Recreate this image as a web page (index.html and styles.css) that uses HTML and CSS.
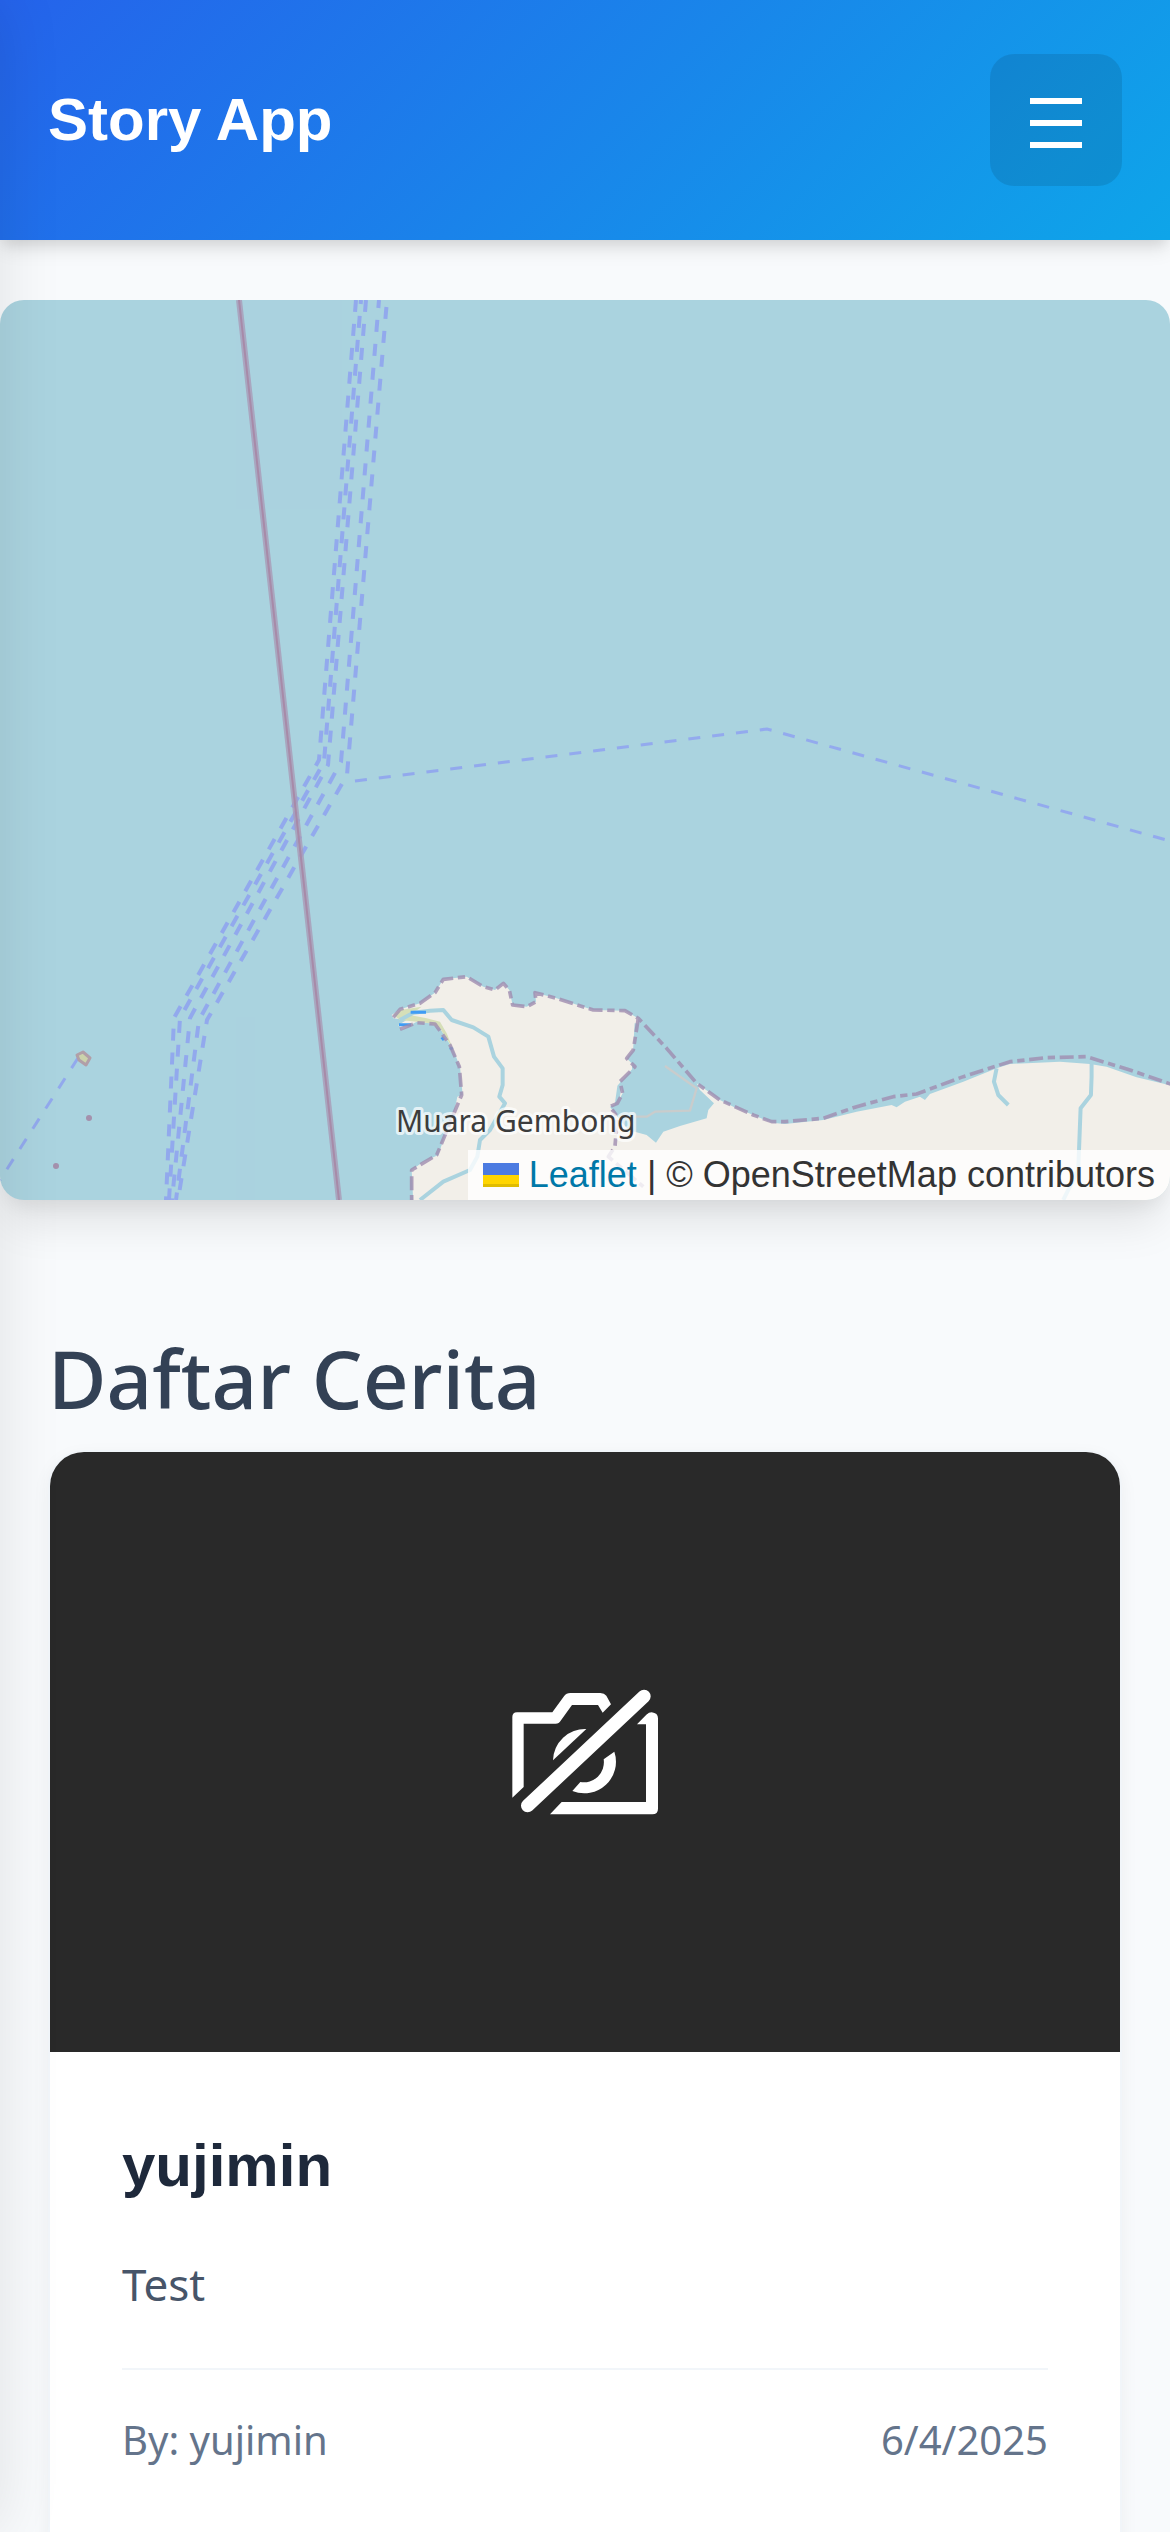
FILE: index.html
```html
<!DOCTYPE html>
<html lang="id">
<head>
  <meta charset="utf-8">
  <meta name="viewport" content="width=device-width, initial-scale=1">
  <title>Story App</title>
  <link rel="stylesheet" href="styles.css">
</head>
<body>
  <header class="site-header">
    <h1 class="brand">Story App</h1>
    <button class="menu-button" type="button" aria-label="Menu">
      <svg class="menu-icon" viewBox="0 0 52 60" aria-hidden="true">
        <path d="M0 11h52M0 33h52M0 55h52" stroke="currentColor" stroke-width="6"/>
      </svg>
    </button>
  </header>

  <main>
    <section class="map" aria-label="Peta">
      <svg class="map-tiles" viewBox="0 0 1170 900" preserveAspectRatio="xMidYMid slice" aria-hidden="true">
        <!-- ferry routes -->
        <g fill="none" stroke="#90a5ef" stroke-width="4" stroke-dasharray="12 12" opacity=".9">
          <path d="M356 0L319 460L174 718L166 900"/>
          <path d="M361 0L324 462L180 718L169 900" stroke-dashoffset="8"/>
          <path d="M366 0L328 465L190 718L172 900"/>
          <path d="M379 0L341 462L199 720L176 900" stroke-dashoffset="4"/>
          <path d="M387 0L347 475L207 720L178 900" stroke-dashoffset="17"/>
          <path d="M355 481L767 429L1170 541" stroke-width="3"/>
          <path d="M78 758L0 880" stroke-width="3"/>
        </g>
        <!-- marine boundary -->
        <path d="M239 0L339 900" stroke="#a99cb8" stroke-width="6" opacity=".8"/>
        <path d="M239 0L339 900" stroke="#a78aa8" stroke-width="2"/>
        <!-- small islands -->
        <path d="M77 755L83 752L90 758L86 765L79 760Z" fill="#cbd3ac" stroke="#b19fa8" stroke-width="3" stroke-linejoin="round"/>
        <circle cx="89" cy="818" r="3" fill="#a491ad"/>
        <circle cx="56" cy="866" r="3" fill="#a491ad"/>
        <!-- coast -->
        <g transform="translate(380 640) scale(.3333)" fill="none" stroke-linejoin="round">
          <path fill="#f2efe9" d="M35 225L60 208L120 190L165 158L190 118L260 110L310 140L345 150L370 130L388 150L398 195L440 200L468 185L465 158L530 175L640 210L735 212L775 235L768 290L760 330L740 355L765 380L750 405L720 425L728 460L712 490L690 500L712 530L745 570L800 585L828 608L850 575L900 558L980 535L985 510L1002 490L960 450L950 430L1020 480L1060 500L1120 525L1175 548L1215 552L1330 540L1430 515L1535 495L1550 502L1575 485L1620 470L1635 480L1650 462L1750 425L1850 385L1890 372L2040 365L2130 372L2180 380L2270 412L2380 438V790H100L95 690L130 665L175 645L190 600L222 520L232 470L248 465L240 380L220 330L180 265L150 250L110 245L65 270L55 255L80 240L40 235Z"/>
          <path fill="#d6dfb8" d="M40 225L60 210L125 200L90 225L140 235L180 245L200 280L218 325L180 265L150 250L110 245L60 240Z"/>
          <g stroke="#aad3df" stroke-width="12">
            <path d="M60 240L100 218L150 212L190 210L215 240L280 262L325 290L342 350L368 385L368 435L358 470L375 490L330 570L300 600L292 650L270 690L190 725L120 780"/>
            <path d="M1850 385L1842 425L1855 465L1885 495"/>
            <path d="M2135 370V410L2133 465L2102 505L2095 690L2050 780"/>
            <path d="M770 250L762 390L718 440L708 510"/>
          </g>
          <path d="M92 217H138M57 254H93M185 292L192 300M210 323L218 328" stroke="#3f9cf5" stroke-width="9"/>
          <path d="M855 378L950 445L930 512L825 515L800 530H765" stroke="#c9cccc" stroke-width="7"/>
          <g stroke="#a08db0" stroke-width="11" stroke-dasharray="42 14 22 14" opacity=".8">
            <path d="M40 232L60 208L120 190L165 158L190 118L260 110L310 140L345 150L370 130L388 150L398 195L440 200L468 185L465 158L530 175L640 210L735 212L775 235L860 325L950 430L1020 480L1120 525L1175 545H1215L1330 535L1430 500L1540 470L1610 462L1750 410L1890 365L2000 353L2120 350L2250 390L2380 435"/>
            <path d="M775 235L760 330L740 355L765 380L720 425L728 460L712 490L690 500L712 530L705 620L685 650L790 740"/>
            <path d="M60 268L110 248L165 252L210 315L238 380L245 465L222 520L185 610L170 645L95 690V780"/>
          </g>
        </g>
        <text class="place" x="396" y="832">Muara Gembong</text>
      </svg>
      <p class="attribution">
        <a href="#leaflet"><svg class="flag" viewBox="0 0 12 8" aria-hidden="true"><path fill="#4C7BE1" d="M0 0h12v4H0z"/><path fill="#FFD500" d="M0 4h12v3H0z"/><path fill="#E0BC00" d="M0 7h12v1H0z"/></svg> Leaflet</a> | © OpenStreetMap contributors
      </p>
    </section>

    <section class="stories">
      <h2 class="section-title">Daftar Cerita</h2>
      <article class="card">
        <div class="card-image">
          <svg class="no-photo" viewBox="1 5 630 540" fill="#fff" role="img" aria-label="Foto tidak tersedia">
            <path d="M98 412V170Q98 156 112 156H218L253 108Q260 98 272 98H362Q374 98 380 106L394 132L369 157L355 134H277L243 181Q238 190 228 190H132V380Z"/>
            <path d="M472 192L500 163Q508 156 516 156Q535 158 535 174V445Q535 462 518 462H211L246 425H499V192Z"/>
            <path d="M320 206L220 300A96 96 0 0 1 320 206Z"/>
            <path d="M404 274A95 95 0 0 1 278 392L302 365A60 60 0 0 0 372 297Z"/>
            <path d="M144 436L493 108" stroke="#fff" stroke-width="40" stroke-linecap="round"/>
          </svg>
        </div>
        <div class="card-body">
          <h3 class="card-title">yujimin</h3>
          <p class="card-text">Test</p>
          <footer class="card-meta">
            <span>By: yujimin</span>
            <time datetime="2025-06-04">6/4/2025</time>
          </footer>
        </div>
      </article>
    </section>
  </main>
</body>
</html>
```
FILE: styles.css
```css
* {
  box-sizing: border-box;
  margin: 0;
}

body {
  background: #f8fafc;
  color: #1e293b;
  font-family: "Noto Sans", "Open Sans", sans-serif;
  overflow-x: hidden;
}

/* shadow of the closed drawer at the left edge */
body::before {
  content: "";
  position: fixed;
  z-index: 10;
  top: 0;
  bottom: 0;
  right: 100%;
  width: 300px;
  box-shadow: 0 0 60px rgba(0, 0, 0, 0.1);
  pointer-events: none;
}

.site-header {
  display: flex;
  align-items: center;
  justify-content: space-between;
  padding: 54px 48px;
  background: linear-gradient(135deg, #2563eb, #0ea5e9);
  box-shadow: 0 12px 18px -3px rgba(0, 0, 0, 0.1), 0 6px 12px -3px rgba(0, 0, 0, 0.08);
  color: #fff;
}

.brand {
  font: bold 60px/72px "Liberation Sans", Arial, sans-serif;
}

.menu-button {
  display: grid;
  place-items: center;
  width: 132px;
  height: 132px;
  border: 0;
  border-radius: 24px;
  background: rgba(0, 0, 0, 0.1);
  color: inherit;
}

.menu-icon {
  display: block;
  width: 52px;
  height: 60px;
}

.map {
  position: relative;
  height: 900px;
  margin-top: 60px;
  border-radius: 24px;
  background: #aad3df;
  box-shadow: 0 30px 45px -9px rgba(0, 0, 0, 0.1), 0 12px 18px -6px rgba(0, 0, 0, 0.06);
  overflow: hidden;
}

.map-tiles {
  display: block;
  width: 100%;
  height: 100%;
}

.place {
  fill: #3c3c3c;
  stroke: rgba(255, 255, 255, 0.7);
  stroke-width: 6px;
  stroke-linejoin: round;
  paint-order: stroke;
  font-size: 30px;
}

.attribution {
  position: absolute;
  right: 0;
  bottom: 0;
  padding: 0 15px;
  background: rgba(255, 255, 255, 0.8);
  color: #333;
  font: 36px/50px "Liberation Sans", Arial, sans-serif;
}

.attribution a {
  color: #0078a8;
  text-decoration: none;
}

.flag {
  width: 36px;
  height: 24px;
}

.stories {
  padding: 120px 48px 48px;
}

.section-title {
  color: #334155;
  font-size: 80px;
  font-weight: 500;
  line-height: 116px;
  margin-bottom: 14px;
}

.card {
  border: 2px solid #f1f5f9;
  border-radius: 36px;
  background: #fff;
  box-shadow: 0 6px 18px rgba(0, 0, 0, 0.05);
  overflow: hidden;
}

.card-image {
  display: grid;
  place-items: center;
  height: 600px;
  background: #292929;
}

.no-photo {
  width: 210px;
  height: 180px;
}

.card-body {
  padding: 72px 72px 108px;
}

.card-title {
  font: bold 60px/84px "Liberation Sans", Arial, sans-serif;
}

.card-text {
  margin: 36px 0 44px;
  color: #475569;
  font-size: 44px;
  line-height: 80px;
}

.card-meta {
  display: flex;
  justify-content: space-between;
  padding-top: 36px;
  border-top: 2px solid #f1f5f9;
  color: #64748b;
  font-size: 40px;
  line-height: 68px;
}
```
